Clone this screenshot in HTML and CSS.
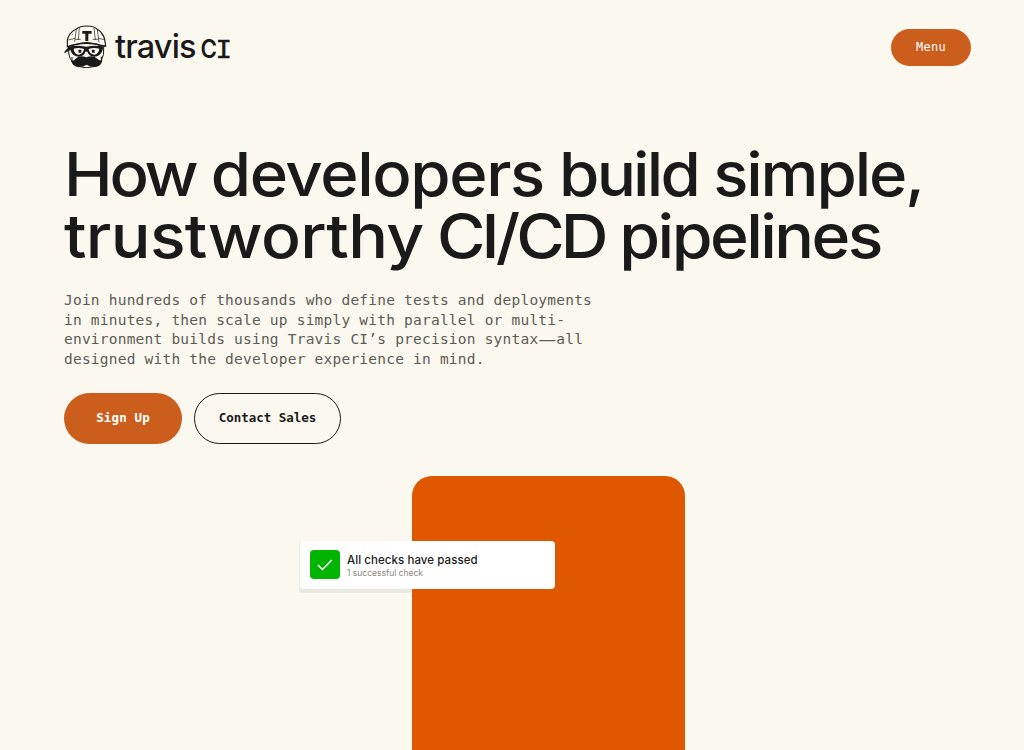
FILE: index.html
```html
<!DOCTYPE html>
<html lang="en">
<head>
<meta charset="utf-8">
<title>Travis CI</title>
<link rel="stylesheet" href="styles.css">
</head>
<body>
<header class="header">
  <a class="logo" aria-label="Travis CI">
    <svg class="mascot" viewBox="12 15 129 132" fill="none" stroke="#1a1a1a">
      <path d="M27 80 Q23 108 36 124 Q50 142 79 143 Q110 142 123 124 Q134 105 131 80" fill="#fbf8ef" stroke-width="3"/>
      <path d="M22 80 V60 Q28 36 49 27 Q60 18 80 18 Q103 18 112 28 Q129 38 134 58 L137 78 Q119 79 108 72 Q80 63 51 72 Z" fill="#fbf8ef" stroke-width="3.5"/>
      <path d="M49 28 L44 66 M112 29 L117 67 M58 23 L55 60 M102 23 L106 60 M25 60 L45 55 M115 55 L134 59 M35 45 L39 42 M124 43 L128 48" stroke-width="2"/>
      <path d="M46 58 H62 M98 58 H115" stroke-width="2"/>
      <path d="M67 33 H95 V41 H85 V63 H76 V41 H67 Z" fill="#1a1a1a" stroke="none"/>
      <path d="M22 81 Q48 70 79 70 Q110 70 137 79" stroke-width="4"/>
      <path d="M28 79 L14 95 V99 L34 88 Z" fill="#1a1a1a" stroke-width="1"/>
      <path d="M28 79 Q54 75 79 80 Q104 75 130 79 L128 89 Q122 109 102 110 Q87 109 82 95 H76 Q73 109 56 110 Q36 108 31 89 Z M41 86 Q42 102 56 104 Q70 102 72 87 Q57 82 41 86 Z M86 87 Q88 102 102 104 Q116 102 118 86 Q101 82 86 87 Z" fill="#1a1a1a" fill-rule="evenodd" stroke="none"/>
      <path d="M55 89 H64 V98 H56 Z M95 89 H104 V98 H96 Z" fill="#1a1a1a" stroke="none"/>
      <path d="M36 111 V124 M124 110 V124 M46 133 L57 141 M112 134 L100 141" stroke-width="3"/>
      <path d="M79 112 Q58 103 46 117 Q41 124 33 121 Q37 141 56 141 Q71 141 80 134 Q89 141 104 141 Q124 141 127 120 Q119 124 113 117 Q100 103 79 112 Z" fill="#1a1a1a" stroke="none"/>
    </svg>
    <svg class="wordmark" width="118" height="42" viewBox="0 0 118 42">
      <text class="word-travis" x="0" y="32" textLength="81.5" lengthAdjust="spacing">travis</text>
      <text class="word-c" x="85.5" y="32" textLength="16.5" lengthAdjust="spacingAndGlyphs">C</text>
      <text class="word-i" x="100.6" y="32" textLength="16.5" lengthAdjust="spacingAndGlyphs">I</text>
    </svg>
  </a>
  <a class="menu">Menu</a>
</header>
<main class="hero">
  <h1 class="title"><span class="line line-a"><span class="w-how">How</span> <span class="w-developers">developers</span> <span class="w-build">build</span> simple,</span><br><span class="line line-b"><span class="w-trust">trustworthy</span> <span class="w-cicd">CI/CD</span> <span class="w-pipe">pipelines</span></span></h1>
  <p class="lead">Join hundreds of thousands who define tests and deployments<br>in minutes, then scale up simply with parallel or multi-<br>environment builds using Travis CI’s precision syntax<span class="dash">—</span>all<br>designed with the developer experience in mind.</p>
  <div class="actions">
    <a class="button button-primary">Sign Up</a>
    <a class="button button-outline">Contact Sales</a>
  </div>
  <div class="art">
    <div class="panel"></div>
    <div class="check-card">
      <span class="check-box"><svg width="30" height="30" viewBox="0 0 30 30" fill="none" stroke="#fff" stroke-width="1.6"><path d="M8 15.2 L12.5 19.5 L21.8 10"/></svg></span>
      <div class="check-text">
        <div class="check-title">All checks have passed</div>
        <div class="check-sub">1 successful check</div>
      </div>
    </div>
  </div>
</main>
</body>
</html>
```
FILE: styles.css
```css
* { box-sizing: border-box; }
body { margin: 0; height: 750px; overflow: hidden; background: #fbf8ef; color: #1a1a1a; font-family: Inter, sans-serif; }
.header { height: 94px; padding: 0 53px 0 64px; display: flex; align-items: center; justify-content: space-between; }
.logo { display: flex; align-items: center; gap: 8px; }
.mascot { width: 43px; height: 44px; }
.wordmark { display: block; overflow: visible; fill: #1a1a1a; }
.word-travis { font: 550 32.5px Inter, sans-serif; }
.word-c { font: 600 25px Inter, sans-serif; }
.word-i { font: 400 25px "DejaVu Sans Mono", monospace; stroke: #1a1a1a; stroke-width: .4px; }
.menu { width: 80px; height: 37px; border-radius: 19px; background: #cc5e1d; color: #fff; display: flex; align-items: center; justify-content: center; font: 12px "DejaVu Sans Mono", monospace; letter-spacing: .3px; }
.hero { padding: 49px 64px 0; }
.title { margin: 0; height: 124px; font-size: 61px; line-height: 62px; font-weight: 500; white-space: nowrap; }
.line { display: inline-block; vertical-align: top; transform-origin: 0 50%; letter-spacing: -2px; }
.line-a { transform: scaleX(1.07); }
.line-b { transform: scaleX(1.084); }
.w-how { letter-spacing: -3px; }
.w-developers { letter-spacing: -1.3px; }
.w-build { letter-spacing: -2.6px; }
.w-trust { letter-spacing: -.6px; }
.w-cicd { letter-spacing: -3.6px; margin-left: -2px; }
.w-pipe { letter-spacing: -2.4px; margin-left: -.7px; }
.lead { margin: 24px 0 0; color: #5c5b57; font: 14.5px/19.6px "DejaVu Sans Mono", monospace; letter-spacing: .22px; white-space: nowrap; }
.dash { display: inline-block; width: 17.9px; height: 19px; vertical-align: top; font: 16px/19px "Liberation Sans", sans-serif; letter-spacing: 0; text-align: center; }
.actions { display: flex; gap: 12px; margin-top: 23.6px; }
.button { height: 51px; padding-bottom: 2px; border-radius: 26px; display: flex; align-items: center; justify-content: center; font: bold 12.5px "DejaVu Sans Mono", monospace; letter-spacing: -.02px; }
.button-primary { width: 118px; background: #cc5e1d; color: #fff; letter-spacing: .15px; }
.button-outline { width: 147px; border: 1px solid #1a1a1a; }
.art { position: relative; z-index: 0; height: 274px; margin-top: 32px; }
.panel { margin-left: 348px; width: 273px; height: 290px; border-radius: 20px 20px 0 0; background: #df5800; }
.check-card { position: absolute; left: 236px; top: 65px; width: 255px; height: 48px; padding: 9px 10px; border-radius: 4px; background: #fff; display: flex; gap: 7px; }
.check-card::before { content: ""; position: absolute; left: -1px; top: 0; width: 113px; height: 52px; border-radius: 4px; background: #ebe8e1; z-index: -1; }
.check-box { width: 30px; height: 29px; border-radius: 4px; background: #00b400; }
.check-box svg { display: block; }
.check-text { white-space: nowrap; }
.check-title { font-size: 11.5px; line-height: 15px; margin-top: 3px; font-weight: 500; letter-spacing: .07px; }
.check-sub { font-size: 8.5px; line-height: 11px; color: #8d8981; }
```
